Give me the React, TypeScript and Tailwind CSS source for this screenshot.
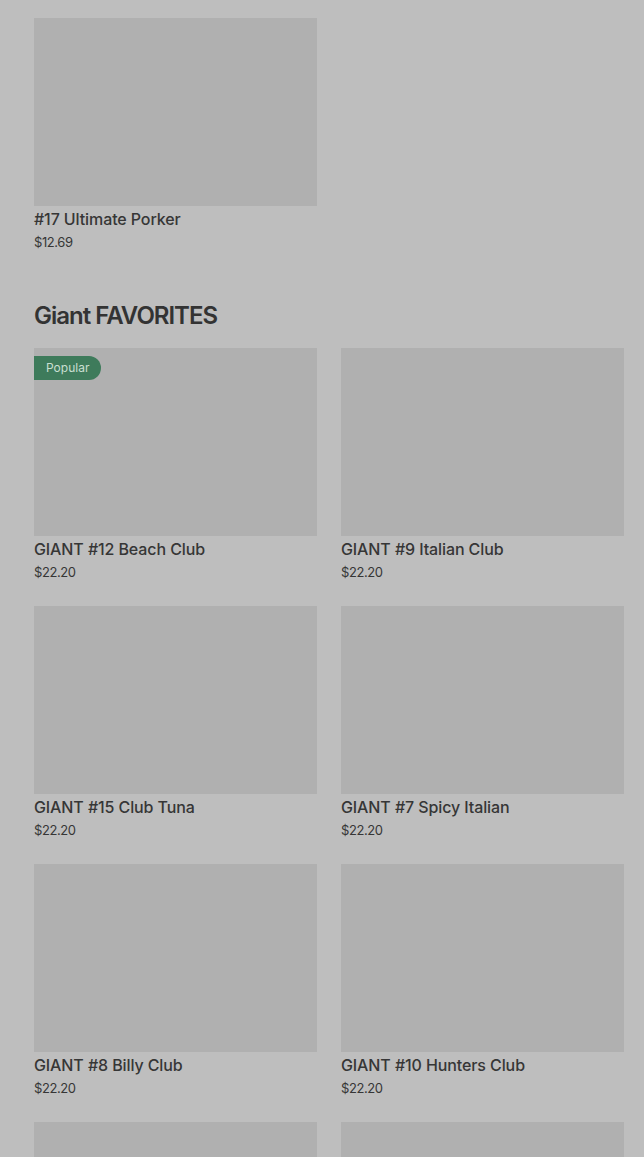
import React from "react";

type Item = { name?: string; price?: string; popular?: boolean };

const Card = ({ item }: { item: Item }) => (
  <div className="flex flex-col">
    <div className="relative h-[188px] bg-[#b0b0b0]">
      {item.popular && (
        <div className="absolute left-0 top-[8px] flex h-[24px] items-center rounded-r-full bg-[#3e7b5b] pl-[12px] pr-[12px] text-[12px] text-[#c9dfd1]">
          Popular
        </div>
      )}
    </div>
    {item.name && (
      <>
        <div className="pt-[1px] text-[16px] leading-[24px] font-medium tracking-[-0.1px] text-[#363636]">{item.name}</div>
        <div className="mt-[1px] text-[13px] leading-[20px] text-[#363636] tracking-[-0.4px]">{item.price}</div>
      </>
    )}
  </div>
);

const favorites: Item[] = [
  { name: "GIANT #12 Beach Club", price: "$22.20", popular: true },
  { name: "GIANT #9 Italian Club", price: "$22.20" },
  { name: "GIANT #15 Club Tuna", price: "$22.20" },
  { name: "GIANT #7 Spicy Italian", price: "$22.20" },
  { name: "GIANT #8 Billy Club", price: "$22.20" },
  { name: "GIANT #10 Hunters Club", price: "$22.20" },
  {},
  {},
];

export default function App() {
  return (
    <div
      className="h-[1157px] w-[644px] overflow-hidden bg-[#bebebe] px-[34px] pr-[20px] pt-[18px]"
      style={{ fontFamily: "Inter, 'Liberation Sans', sans-serif" }}
    >
      <div className="grid grid-cols-2 gap-x-[24px]">
        <Card item={{ name: "#17 Ultimate Porker", price: "$12.69" }} />
      </div>
      <h2 className="mt-[48px] mb-[16px] text-[24px] leading-[32px] font-semibold tracking-[-1px] text-[#333333]">
        Giant FAVORITES
      </h2>
      <div className="grid grid-cols-2 gap-x-[24px] gap-y-[24px]">
        {favorites.map((f, i) => (
          <Card key={i} item={f} />
        ))}
      </div>
    </div>
  );
}
